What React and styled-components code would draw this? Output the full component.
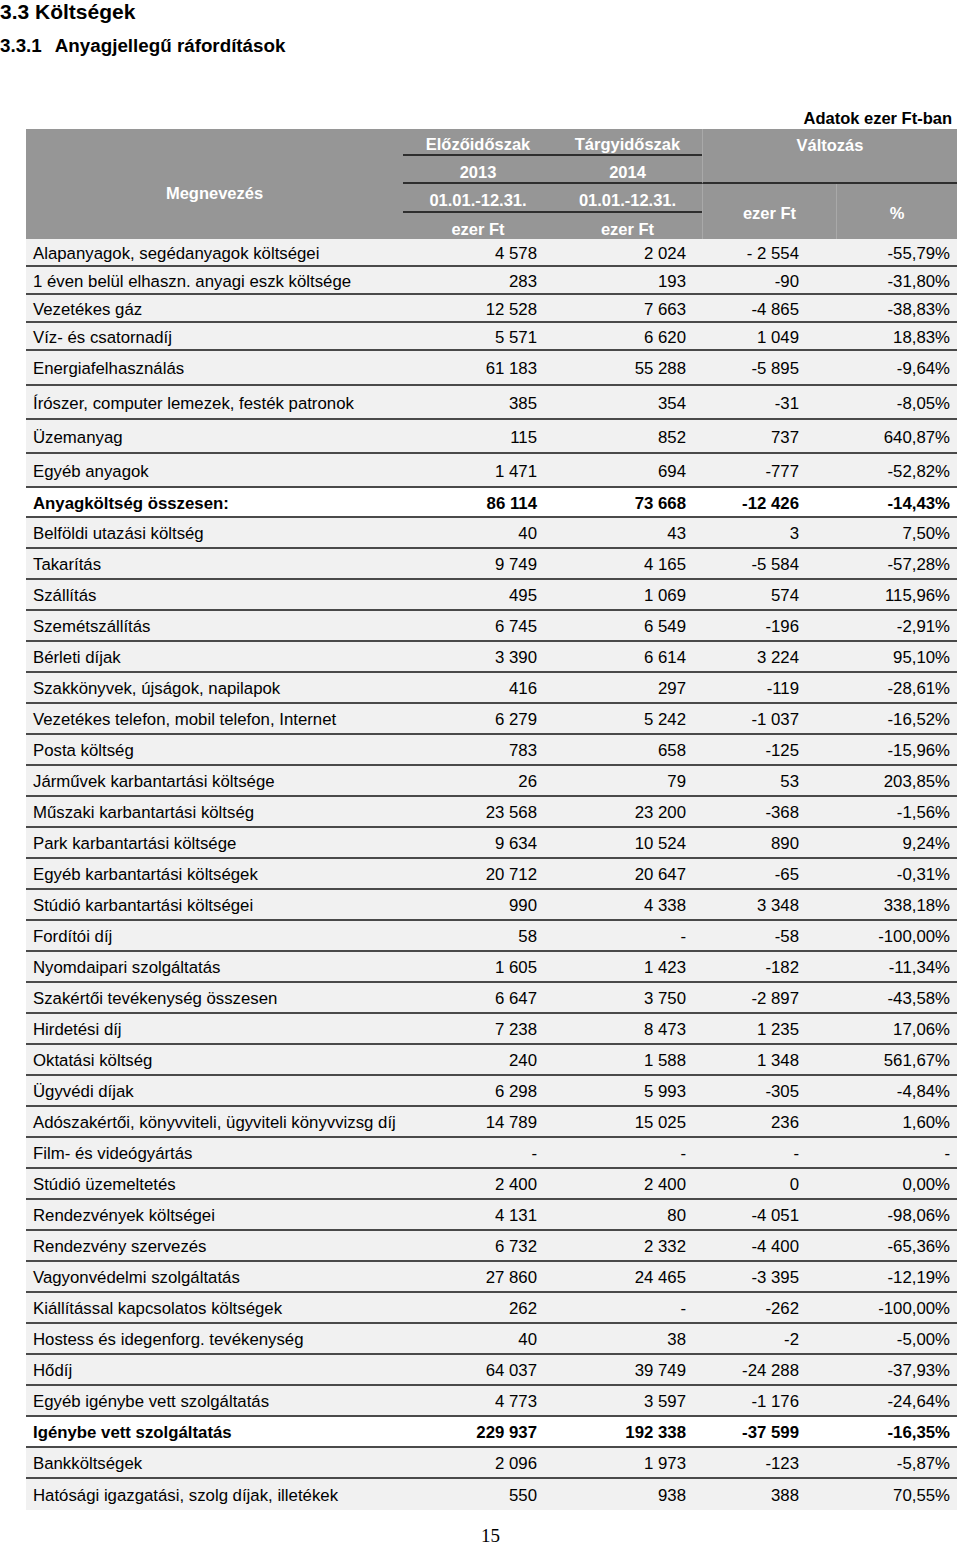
import React from 'react';
import styled, { createGlobalStyle } from 'styled-components';

const GlobalStyle = createGlobalStyle`
  body {
    margin: 0;
    background: #fff;
    font-family: "Liberation Sans", Arial, sans-serif;
    color: #000;
  }
`;

const COLS = '377px 150px 149px 134px 121px';

const Page = styled.div`
  width: 960px;
  padding-bottom: 8px;
`;

const Title = styled.h1`
  margin: 0;
  height: 26px;
  font-size: 21px;
  font-weight: bold;
  line-height: 24px;
`;

const Subtitle = styled.h2`
  margin: 0;
  padding-top: 9px;
  font-size: 18.8px;
  font-weight: bold;
  line-height: 22px;
`;

const SectionNo = styled.span`
  margin-right: 13px;
`;

const Unit = styled.div`
  margin: 52px 0 0 26px;
  width: 926px;
  text-align: right;
  font-size: 16.5px;
  font-weight: bold;
  line-height: 18px;
  height: 20px;
`;

const Table = styled.div`
  margin-left: 26px;
  width: 931px;
`;

const Head = styled.div`
  display: grid;
  grid-template-columns: ${COLS};
  grid-template-rows: 27px 28px 29px 26px;
  background: #969696;
  color: #fff;
  font-size: 16.5px;
  font-weight: bold;
`;

const HeadCell = styled.div`
  grid-column: ${p => p.$col};
  grid-row: ${p => p.$row};
  display: flex;
  align-items: ${p => (p.$top ? 'flex-start' : 'center')};
  justify-content: center;
  padding-top: ${p => p.$pt ?? 6}px;
  box-sizing: border-box;
  border-bottom: ${p => (p.$line ? '2px solid #2e2e2e' : 'none')};
  border-left: ${p => (p.$divider ? '1px solid #a9a9a9' : 'none')};
`;

const Row = styled.div`
  display: grid;
  grid-template-columns: ${COLS};
  height: ${p => p.$h}px;
  box-sizing: border-box;
  padding-top: 3px;
  background: ${p => (p.$bold ? '#fff' : '#f1f1f1')};
  border-bottom: ${p => (p.$last ? 'none' : '2px solid #4a4a4a')};
  font-size: 16.8px;
  font-weight: ${p => (p.$bold ? 'bold' : 'normal')};
`;

const Label = styled.div`
  display: flex;
  align-items: center;
  padding-left: 7px;
  white-space: nowrap;
`;

const Num = styled.div`
  display: flex;
  align-items: center;
  justify-content: flex-end;
  padding-right: ${p => p.$pad}px;
  white-space: nowrap;
`;

const PageNo = styled.div`
  padding: 15px 0 0 481px;
  font-family: "Liberation Serif", "Times New Roman", serif;
  font-size: 19px;
  line-height: 22px;
`;

const rows = [
  ['Alapanyagok, segédanyagok költségei', '4 578', '2 024', '- 2 554', '-55,79%', 28],
  ['1 éven belül elhaszn. anyagi eszk költsége', '283', '193', '-90', '-31,80%', 28],
  ['Vezetékes gáz', '12 528', '7 663', '-4 865', '-38,83%', 28],
  ['Víz- és csatornadíj', '5 571', '6 620', '1 049', '18,83%', 28],
  ['Energiafelhasználás', '61 183', '55 288', '-5 895', '-9,64%', 35],
  ['Írószer, computer lemezek, festék patronok', '385', '354', '-31', '-8,05%', 34],
  ['Üzemanyag', '115', '852', '737', '640,87%', 34],
  ['Egyéb anyagok', '1 471', '694', '-777', '-52,82%', 34],
  ['Anyagköltség összesen:', '86 114', '73 668', '-12 426', '-14,43%', 30, true],
  ['Belföldi utazási költség', '40', '43', '3', '7,50%'],
  ['Takarítás', '9 749', '4 165', '-5 584', '-57,28%'],
  ['Szállítás', '495', '1 069', '574', '115,96%'],
  ['Szemétszállítás', '6 745', '6 549', '-196', '-2,91%'],
  ['Bérleti díjak', '3 390', '6 614', '3 224', '95,10%'],
  ['Szakkönyvek, újságok, napilapok', '416', '297', '-119', '-28,61%'],
  ['Vezetékes telefon, mobil telefon, Internet', '6 279', '5 242', '-1 037', '-16,52%'],
  ['Posta költség', '783', '658', '-125', '-15,96%'],
  ['Járművek karbantartási költsége', '26', '79', '53', '203,85%'],
  ['Műszaki karbantartási  költség', '23 568', '23 200', '-368', '-1,56%'],
  ['Park karbantartási költsége', '9 634', '10 524', '890', '9,24%'],
  ['Egyéb karbantartási költségek', '20 712', '20 647', '-65', '-0,31%'],
  ['Stúdió karbantartási költségei', '990', '4 338', '3 348', '338,18%'],
  ['Fordítói díj', '58', '-', '-58', '-100,00%'],
  ['Nyomdaipari szolgáltatás', '1 605', '1 423', '-182', '-11,34%'],
  ['Szakértői tevékenység összesen', '6 647', '3 750', '-2 897', '-43,58%'],
  ['Hirdetési díj', '7 238', '8 473', '1 235', '17,06%'],
  ['Oktatási költség', '240', '1 588', '1 348', '561,67%'],
  ['Ügyvédi díjak', '6 298', '5 993', '-305', '-4,84%'],
  ['Adószakértői, könyvviteli, ügyviteli könyvvizsg díj', '14 789', '15 025', '236', '1,60%'],
  ['Film- és videógyártás', '-', '-', '-', '-'],
  ['Stúdió üzemeltetés', '2 400', '2 400', '0', '0,00%'],
  ['Rendezvények költségei', '4 131', '80', '-4 051', '-98,06%'],
  ['Rendezvény szervezés', '6 732', '2 332', '-4 400', '-65,36%'],
  ['Vagyonvédelmi szolgáltatás', '27 860', '24 465', '-3 395', '-12,19%'],
  ['Kiállítással kapcsolatos költségek', '262', '-', '-262', '-100,00%'],
  ['Hostess és idegenforg. tevékenység', '40', '38', '-2', '-5,00%'],
  ['Hődíj', '64 037', '39 749', '-24 288', '-37,93%'],
  ['Egyéb igénybe vett szolgáltatás', '4 773', '3 597', '-1 176', '-24,64%'],
  ['Igénybe vett szolgáltatás', '229 937', '192 338', '-37 599', '-16,35%', 31, true],
  ['Bankköltségek', '2 096', '1 973', '-123', '-5,87%'],
  ['Hatósági igazgatási, szolg díjak, illetékek', '550', '938', '388', '70,55%'],
];

const PADS = [16, 16, 37, 7];

export default function App() {
  return (
    <Page>
      <GlobalStyle />
      <Title>3.3 Költségek</Title>
      <Subtitle><SectionNo>3.3.1</SectionNo>Anyagjellegű ráfordítások</Subtitle>
      <Unit>Adatok ezer Ft-ban</Unit>
      <Table>
        <Head>
          <HeadCell $col="1" $row="1 / 5" $pt={18}>Megnevezés</HeadCell>
          <HeadCell $col="2" $row="1" $line>Előzőidőszak</HeadCell>
          <HeadCell $col="3" $row="1" $line>Tárgyidőszak</HeadCell>
          <HeadCell $col="4 / 6" $row="1 / 3" $line $divider $top $pt={7}>Változás</HeadCell>
          <HeadCell $col="2" $row="2" $line>2013</HeadCell>
          <HeadCell $col="3" $row="2" $line>2014</HeadCell>
          <HeadCell $col="2" $row="3" $line>01.01.-12.31.</HeadCell>
          <HeadCell $col="3" $row="3" $line>01.01.-12.31.</HeadCell>
          <HeadCell $col="2" $row="4">ezer Ft</HeadCell>
          <HeadCell $col="3" $row="4">ezer Ft</HeadCell>
          <HeadCell $col="4" $row="3 / 5" $divider $pt={3}>ezer Ft</HeadCell>
          <HeadCell $col="5" $row="3 / 5" $divider $pt={3}>%</HeadCell>
        </Head>
        {rows.map(([label, a, b, c, d, h = 31, bold = false], i) => (
          <Row key={label} $h={h} $bold={bold} $last={i === rows.length - 1}>
            <Label>{label}</Label>
            {[a, b, c, d].map((v, j) => (
              <Num key={j} $pad={PADS[j]}>{v}</Num>
            ))}
          </Row>
        ))}
      </Table>
      <PageNo>15</PageNo>
    </Page>
  );
}
